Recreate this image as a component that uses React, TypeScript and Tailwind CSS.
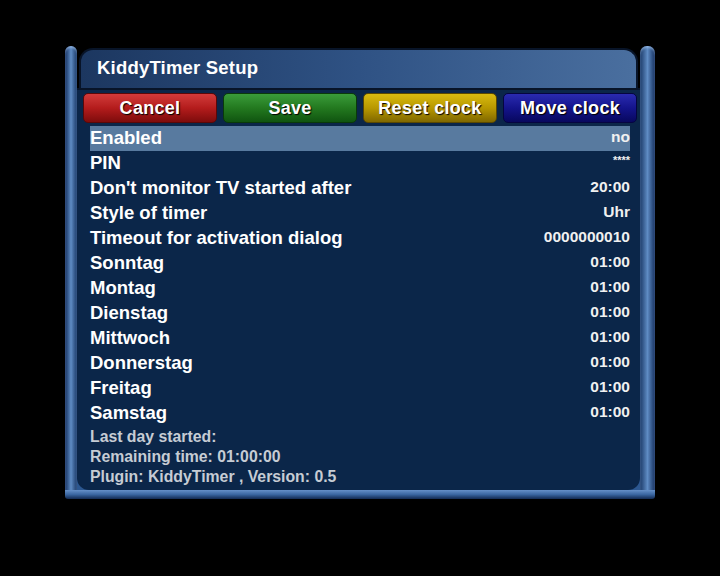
import React from "react";

const rows: { label: string; value: string; value_small?: boolean }[] = [
  { label: "Enabled", value: "no" },
  { label: "PIN", value: "****", value_small: true },
  { label: "Don't monitor TV started after", value: "20:00" },
  { label: "Style of timer", value: "Uhr" },
  { label: "Timeout for activation dialog", value: "0000000010" },
  { label: "Sonntag", value: "01:00" },
  { label: "Montag", value: "01:00" },
  { label: "Dienstag", value: "01:00" },
  { label: "Mittwoch", value: "01:00" },
  { label: "Donnerstag", value: "01:00" },
  { label: "Freitag", value: "01:00" },
  { label: "Samstag", value: "01:00" },
];

const buttons = [
  { label: "Cancel", cls: "bg-gradient-to-b from-[#d23a3a] via-[#b41c1c] to-[#7e0c0c] border-[#5a0808]" },
  { label: "Save", cls: "bg-gradient-to-b from-[#3a9c3a] via-[#23791f] to-[#105510] border-[#0a3a0a]" },
  { label: "Reset clock", cls: "bg-gradient-to-b from-[#d8ba10] via-[#b89800] to-[#806800] border-[#5a4800]" },
  { label: "Move clock", cls: "bg-gradient-to-b from-[#2a2ab0] via-[#14148c] to-[#08085e] border-[#050540]" },
];

export default function App() {
  return (
    <div className="w-[720px] h-[576px] bg-black pt-[46px] pl-[65px] font-['Liberation_Sans',Arial,sans-serif]">
      <div className="w-[590px] h-[453px] flex flex-col">
        <div className="flex flex-1">
          {/* left bevel */}
          <div className="w-[12px] rounded-t-[7px] bg-gradient-to-r from-[#173160] via-[#5f8cc4] to-[#1b3a68] shadow-[inset_0_2px_2px_rgba(180,210,250,0.5)]" />
          <div className="flex-1 flex flex-col">
            {/* title */}
            <div className="h-[40px] mt-[2px] mx-[2px] rounded-t-[14px] border-2 border-b-0 border-[#081428] bg-gradient-to-r from-[#1c3760] via-[#2f5284] to-[#4a6f9f] flex items-center pl-[16px] pb-[1px]">
              <span className="text-white font-bold text-[18.5px] leading-none tracking-[0.2px]">KiddyTimer Setup</span>
            </div>
            {/* panel */}
            <div className="flex-1 bg-[#2c5790]">
              <div className="h-full bg-[#0b2649] rounded-b-[12px] border-t-2 border-[#081428] flex flex-col">
                <div className="flex gap-[6px] pl-[6px] pt-[3px]">
                  {buttons.map((b) => (
                    <div
                      key={b.label}
                      className={`w-[134px] h-[30px] rounded-[5px] border ${b.cls} flex items-center justify-center text-white font-bold text-[18px] tracking-[0.3px] [text-shadow:1px_1px_1px_#000]`}
                    >
                      {b.label}
                    </div>
                  ))}
                </div>
                <div className="mt-[3px] ml-[13px] w-[540px] flex flex-col">
                  {rows.map((r, i) => (
                    <div
                      key={r.label}
                      className={`h-[25px] flex items-center justify-between ${i === 0 ? "bg-[#587a9f]" : ""}`}
                    >
                      <span className="text-white font-bold text-[18.5px] leading-none -mt-[1px]">{r.label}</span>
                      <span className={`text-[#f0f0f0] font-bold leading-none ${r.value_small ? "text-[11px] -mt-[6px]" : "text-[15.5px] -mt-[3px]"}`}>
                        {r.value}
                      </span>
                    </div>
                  ))}
                </div>
                <div className="ml-[13px] mt-[1px] flex flex-col text-[#c6ccd4] font-bold text-[15.8px]">
                  <div className="h-[20px] leading-[20px]">Last day started:</div>
                  <div className="h-[20px] leading-[20px]">Remaining time: 01:00:00</div>
                  <div className="h-[20px] leading-[20px]">Plugin: KiddyTimer , Version: 0.5</div>
                </div>
              </div>
            </div>
          </div>
          {/* right bevel */}
          <div className="w-[15px] rounded-t-[7px] bg-gradient-to-r from-[#1b3a68] via-[#5f8cc4] to-[#173160] shadow-[inset_0_2px_2px_rgba(180,210,250,0.5)]" />
        </div>
        {/* bottom bevel */}
        <div className="h-[9px] rounded-b-[3px] bg-gradient-to-b from-[#6690c8] via-[#3a66a0] to-[#132a52]" />
      </div>
    </div>
  );
}
